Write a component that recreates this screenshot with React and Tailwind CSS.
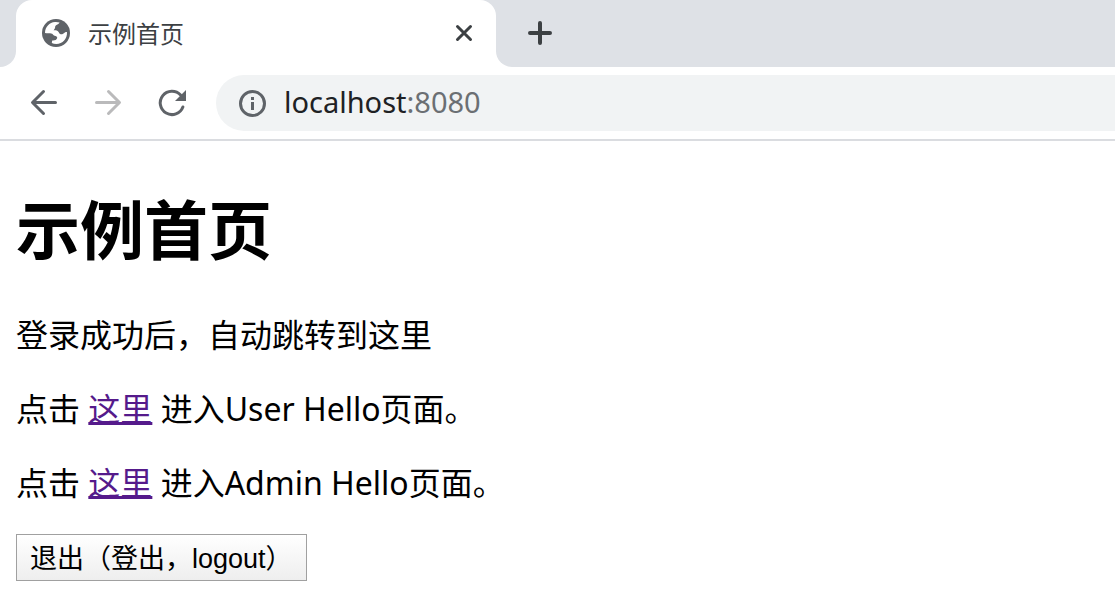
function GlobeIcon() {
  return (
    <svg className="size-7 shrink-0" viewBox="0 0 28 28" aria-hidden="true">
      <circle cx="14" cy="14" r="14" fill="#5f6368" />
      <path
        fill="#ffffff"
        d="M3 14C3 8 7.4 3.4 13 3C14.8 2.9 16.4 3.1 17.6 3.6C16.8 5 15.2 5.6 13.8 6.6C12.8 7.4 13.4 8.4 12.8 9.6C12.4 10.4 11.8 10.8 11.6 11.4C13.4 11.2 15.4 11.6 16.4 12.8C17.2 13.8 17.2 15 18.6 15.2C20.4 15.4 21.8 14.2 23 13.4C23.8 13 24.6 13 25 13.2C25.4 19.6 20.6 24.8 14.4 25C12.6 25 11 24.6 9.8 24.1L10.2 21.4C12.6 21.6 14.8 21 15.2 19C15.4 17.4 14 17.2 12.6 16.8C11 16.2 11 14.6 9 14.4C7 14.2 5 14.6 3 14Z"
      />
    </svg>
  );
}

function CloseIcon() {
  return (
    <svg className="size-6" viewBox="0 0 24 24" fill="none" stroke="#3c4043" strokeWidth="3" strokeLinecap="round" aria-hidden="true">
      <path d="M5.5 5.5L18.5 18.5M18.5 5.5L5.5 18.5" />
    </svg>
  );
}

function PlusIcon() {
  return (
    <svg className="size-6" viewBox="0 0 24 24" fill="none" stroke="#3c4043" strokeWidth="4" strokeLinecap="round" aria-hidden="true">
      <path d="M2 12H22M12 2V22" />
    </svg>
  );
}

function BackIcon() {
  return (
    <svg className="size-8" viewBox="0 0 32 32" fill="none" stroke="currentColor" strokeWidth="3" strokeLinecap="round" strokeLinejoin="round" aria-hidden="true">
      <path d="M27.5 15.5H5M15.5 4.5L4.5 15.5L15.5 26.5" />
    </svg>
  );
}

function ForwardIcon() {
  return (
    <svg className="size-8" viewBox="0 0 32 32" fill="none" stroke="currentColor" strokeWidth="3" strokeLinecap="round" strokeLinejoin="round" aria-hidden="true">
      <path d="M4.5 15.5H27M16.5 4.5L27.5 15.5L16.5 26.5" />
    </svg>
  );
}

function ReloadIcon() {
  return (
    <svg className="size-8" viewBox="0 0 32 32" fill="none" aria-hidden="true">
      <path d="M26.9 20A11.7 11.7 0 1 1 24.6 8" stroke="#5f6368" strokeWidth="3" strokeLinecap="round" />
      <path d="M30 3V14H19Z" fill="#5f6368" />
    </svg>
  );
}

function InfoIcon() {
  return (
    <svg className="size-7 shrink-0" viewBox="0 0 28 28" fill="none" aria-hidden="true">
      <circle cx="14.5" cy="14.5" r="12" stroke="#5f6368" strokeWidth="3" />
      <path d="M13 8H16V11H13ZM13 13H16V21H13Z" fill="#5f6368" />
    </svg>
  );
}

function TabStrip() {
  return (
    <div className="flex h-[67px]">
      <div className="w-4 rounded-br-2xl bg-[#dee1e6]" />
      <div className="w-[480px] bg-[#dee1e6]">
        <div className="flex h-full items-center rounded-t-2xl bg-white pr-5 pb-px pl-[26px]">
          <GlobeIcon />
          <span className="ml-[18px] flex-1 pt-0.5 text-2xl leading-9 text-[#3c4043]">示例首页</span>
          <button type="button" aria-label="关闭">
            <CloseIcon />
          </button>
        </div>
      </div>
      <div className="flex flex-1 items-center rounded-bl-2xl bg-[#dee1e6] pb-px pl-8">
        <button type="button" aria-label="新标签页">
          <PlusIcon />
        </button>
      </div>
    </div>
  );
}

function Toolbar() {
  return (
    <div className="flex items-center gap-8 border-b-2 border-[#dadce0] py-2 pl-7">
      <button type="button" aria-label="后退" className="text-[#5f6368]">
        <BackIcon />
      </button>
      <button type="button" aria-label="前进" disabled className="text-[#bababb]">
        <ForwardIcon />
      </button>
      <button type="button" aria-label="重新加载">
        <ReloadIcon />
      </button>
      <div className="-ml-1 flex h-14 flex-1 items-center gap-[18px] rounded-l-full bg-[#f1f3f4] pl-[22px]">
        <InfoIcon />
        <span className="pb-0.5 text-[29px] leading-9 text-[#202124]">
          localhost<span className="text-[#6b6f73]">:8080</span>
        </span>
      </div>
    </div>
  );
}

function PageLink({ href, children }) {
  return (
    <a href={href} className="text-[#551a8b] underline decoration-[3px] underline-offset-1">
      {children}
    </a>
  );
}

export default function App() {
  return (
    <div className="min-h-screen bg-white font-['Noto_Sans','Noto_Sans_CJK_SC',sans-serif]">
      <header>
        <TabStrip />
        <Toolbar />
      </header>
      <main className="px-4 pt-[47px] text-[32px] leading-[42px] text-black">
        <h1 className="text-[64px] leading-[84px] font-bold">示例首页</h1>
        <p className="mt-[42px]">登录成功后，自动跳转到这里</p>
        <p className="mt-8">
          点击 <PageLink href="#user">这里</PageLink> 进入User Hello页面。
        </p>
        <p className="mt-8">
          点击 <PageLink href="#admin">这里</PageLink> 进入Admin Hello页面。
        </p>
        <button
          type="button"
          className="mt-[30px] block h-[47px] border border-[#a0a0a0] bg-linear-to-b from-white to-[#eeeeee] px-[13px] pt-0.5 font-['Liberation_Sans','Noto_Sans_CJK_SC',sans-serif] text-[27px] leading-9"
        >
          退出（登出，logout）
        </button>
      </main>
    </div>
  );
}
